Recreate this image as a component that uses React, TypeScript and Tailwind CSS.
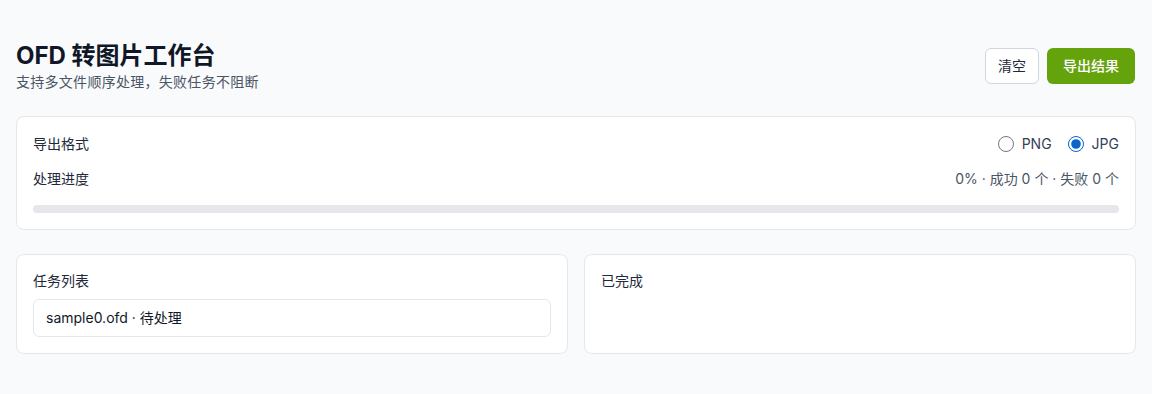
import { useState } from "react";

const font = { fontFamily: 'Inter, "Noto Sans CJK SC", sans-serif' };

export default function App() {
  const [format, setFormat] = useState<"png" | "jpg">("jpg");

  return (
    <div className="min-h-[394px] bg-gray-50 px-4 pt-10 pb-10 text-gray-900" style={font}>
      <header className="flex items-center justify-between">
        <div>
          <h1 className="text-2xl font-bold leading-8 text-gray-900">OFD 转图片工作台</h1>
          <p className="text-sm leading-5 tracking-[0.02em] text-gray-600">支持多文件顺序处理，失败任务不阻断</p>
        </div>
        <div className="flex items-center gap-2 pr-px">
          <button className="h-9 rounded-md border border-gray-300 bg-white px-3 text-sm text-gray-800">
            清空
          </button>
          <button className="h-9 rounded-md bg-[#65a30d] px-4 text-sm font-medium text-white">
            导出结果
          </button>
        </div>
      </header>

      <section className="mt-6 rounded-lg border border-gray-200 bg-white p-4">
        <div className="flex h-[22px] items-center justify-between">
          <span className="text-sm text-gray-800">导出格式</span>
          <div className="flex items-center gap-4 text-sm text-gray-700">
            <label className="flex items-center gap-2">
              <input
                type="radio"
                name="fmt"
                className="m-0 h-4 w-4 accent-[#0b63ce]"
                checked={format === "png"}
                onChange={() => setFormat("png")}
              />
              PNG
            </label>
            <label className="flex items-center gap-2">
              <input
                type="radio"
                name="fmt"
                className="m-0 h-4 w-4 accent-[#0b63ce]"
                checked={format === "jpg"}
                onChange={() => setFormat("jpg")}
              />
              JPG
            </label>
          </div>
        </div>
        <div className="mt-[14px] flex h-5 items-center justify-between text-sm">
          <span className="text-gray-800">处理进度</span>
          <span className="text-gray-600">0% · 成功 0 个 · 失败 0 个</span>
        </div>
        <div className="mt-4 h-2 w-full rounded-full bg-gray-200">
          <div className="h-2 rounded-full bg-[#65a30d]" style={{ width: "0%" }} />
        </div>
      </section>

      <div className="mt-6 grid grid-cols-2 gap-4">
        <section className="rounded-lg border border-gray-200 bg-white p-4">
          <h2 className="text-sm leading-5 text-gray-800">任务列表</h2>
          <ul className="mt-2">
            <li className="rounded-md border border-gray-200 px-3 py-2 text-sm leading-5 text-gray-900">
              sample0.ofd · 待处理
            </li>
          </ul>
        </section>
        <section className="rounded-lg border border-gray-200 bg-white p-4">
          <h2 className="text-sm leading-5 text-gray-800">已完成</h2>
        </section>
      </div>
    </div>
  );
}
